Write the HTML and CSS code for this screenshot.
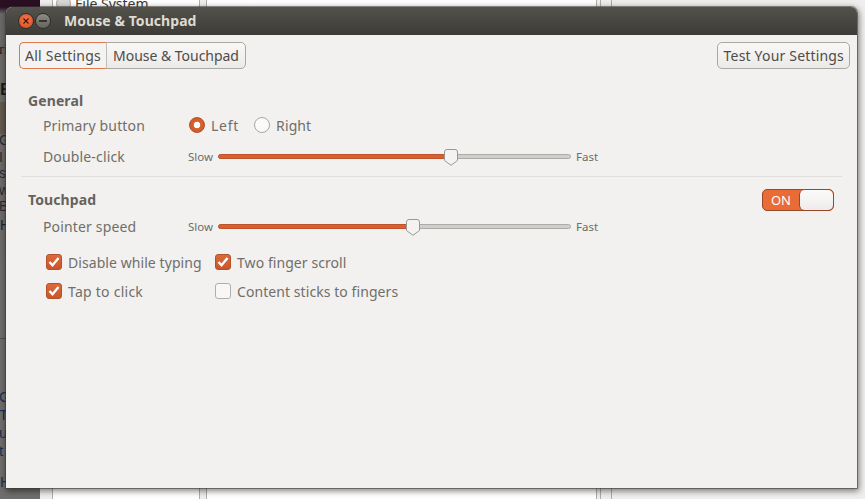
FILE: index.html
```html
<!DOCTYPE html>
<html lang="en">
<head>
<meta charset="utf-8">
<title>Mouse &amp; Touchpad</title>
<link rel="stylesheet" href="styles.css">
</head>
<body>
<div class="desktop">
  <div class="back-left">
    <div class="back-letters l1">ri</div>
    <div class="back-letters l2">E</div>
    <div class="back-band"></div>
    <div class="back-letters l3">G<br>I<br>s<br>w<br>B</div>
    <div class="back-letters l4">H</div>
    <div class="back-rule"></div>
    <div class="back-letters l5">G<br>T<br>u<br>t</div>
    <div class="back-letters l6">H</div>
  </div>
  <div class="back-strip s1"></div>
  <div class="back-strip s2"></div>
  <div class="back-strip s3"></div>
  <div class="back-strip s4"></div>
  <div class="back-file"><span class="back-icon"></span>File System</div>
  <div class="back-line b1"></div>
  <div class="back-line b2"></div>
  <div class="back-line b3"></div>
  <div class="back-line b4"></div>
  <div class="back-line b5"></div>
  <div class="back-line b6"></div>

  <section class="window">
    <header class="titlebar">
      <span class="wbtn close"><svg width="8" height="8" viewBox="0 0 8 8"><path d="M1.5 1.5l5 5M6.5 1.5l-5 5" stroke="#3d1406" stroke-width="1.1" fill="none"/></svg></span>
      <span class="wbtn minimize"><span class="dash"></span></span>
      <span class="title">Mouse &amp; Touchpad</span>
    </header>
    <div class="content">
      <div class="toolbar">
        <div class="crumbs">
          <span class="crumb active">All Settings</span>
          <span class="crumb">Mouse &amp; Touchpad</span>
        </div>
        <button class="btn">Test Your Settings</button>
      </div>

      <div class="group general">
        <h2 class="heading">General</h2>
        <div class="row">
          <span class="label">Primary button</span>
          <div class="radios">
            <span class="radio-item wide"><span class="radio on"></span>Left</span>
            <span class="radio-item"><span class="radio"></span>Right</span>
          </div>
        </div>
        <div class="row row-dbl">
          <span class="label">Double-click</span>
          <div class="scale">
            <span class="end">Slow</span>
            <div class="track"><div class="fill w-dbl"></div><svg class="thumb" width="14" height="17" viewBox="0 0 14 17"><path d="M3 .5h8a2.500 2.500 0 0 1 2.500 2.500v8.500L7 16.300.5 11.500V3A2.500 2.500 0 0 1 3 .5z" fill="#f4f3f2" stroke="#9a9894"/></svg></div>
            <span class="end">Fast</span>
          </div>
        </div>
      </div>

      <div class="separator"></div>

      <div class="group touchpad">
        <div class="head-row">
          <h2 class="heading">Touchpad</h2>
          <div class="switch"><span class="switch-on">ON</span><span class="switch-knob"></span></div>
        </div>
        <div class="row row-speed">
          <span class="label">Pointer speed</span>
          <div class="scale">
            <span class="end">Slow</span>
            <div class="track"><div class="fill w-speed"></div><svg class="thumb" width="14" height="17" viewBox="0 0 14 17"><path d="M3 .5h8a2.500 2.500 0 0 1 2.500 2.500v8.500L7 16.300.5 11.500V3A2.500 2.500 0 0 1 3 .5z" fill="#f4f3f2" stroke="#9a9894"/></svg></div>
            <span class="end">Fast</span>
          </div>
        </div>
        <div class="checks">
          <span class="check-item"><span class="check on"><svg width="16" height="16" viewBox="0 0 16 16"><path d="M3.500 8l3 3.200L12.500 4" stroke="#fff" stroke-width="2.400" fill="none"/></svg></span>Disable while typing</span>
          <span class="check-item"><span class="check on"><svg width="16" height="16" viewBox="0 0 16 16"><path d="M3.500 8l3 3.200L12.500 4" stroke="#fff" stroke-width="2.400" fill="none"/></svg></span>Two finger scroll</span>
          <span class="check-item wide"><span class="check on"><svg width="16" height="16" viewBox="0 0 16 16"><path d="M3.500 8l3 3.200L12.500 4" stroke="#fff" stroke-width="2.400" fill="none"/></svg></span>Tap to click</span>
          <span class="check-item"><span class="check"></span>Content sticks to fingers</span>
        </div>
      </div>
    </div>
  </section>
</div>
</body>
</html>
```
FILE: styles.css
```css
* { box-sizing: border-box; }
html, body { margin: 0; padding: 0; }
body { width: 865px; height: 499px; overflow: hidden; font-family: "Noto Sans", "Open Sans", sans-serif; }

.desktop { position: relative; width: 865px; height: 499px; background: #fff; overflow: hidden; }

.back-left { position: absolute; left: 0; top: 0; width: 40px; height: 499px; overflow: hidden;
  background: linear-gradient(#2b1024 0, #2b1024 7px, #6c6a68 14px, #6f6e6c 100%); }
.back-letters { position: absolute; left: 0; color: #1c2430; font-family: "Liberation Serif", serif; font-size: 15px; }
.l1 { left: -1px; top: 41px; color: #24221f; }
.l2 { top: 80px; font-family: "Liberation Sans", sans-serif; font-weight: 700; font-size: 17px; color: #1b1b1a; }
.back-band { position: absolute; left: 0; top: 102px; width: 40px; height: 32px; background: #62594b; }
.l3 { top: 132px; line-height: 16.500px; font-family: "Liberation Sans", sans-serif; font-size: 14px; left: -1px; color: #272b33; }
.l4 { top: 217px; font-family: "Liberation Sans", sans-serif; font-size: 14px; }
.back-rule { position: absolute; left: 0; top: 338px; width: 40px; height: 1px; background: #4f4e4d; }
.l5 { top: 388px; line-height: 18px; font-family: "Liberation Sans", sans-serif; font-size: 15px; left: -1px; color: #1b3050; }
.l6 { top: 473px; font-family: "Liberation Sans", sans-serif; font-size: 15px; color: #1b3050; }

.back-strip { position: absolute; top: 0; height: 499px; background: #efeeec; }
.s1 { left: 40px; width: 13px; }
.s2 { left: 199px; width: 8px; }
.s3 { left: 596px; width: 4px; }
.s4 { left: 600px; width: 265px; }
.back-file { position: absolute; left: 56px; top: -6px; display: flex; align-items: center; gap: 4px; font-size: 14px; color: #3c3b37; }
.back-icon { width: 15px; height: 15px; border-radius: 50%; background: #d8d7d4; border: 1px solid #a5a4a0; }
.back-line { position: absolute; top: 0; width: 1px; height: 499px; background: #aeada9; }
.b1 { left: 52px; }
.b2 { left: 199px; }
.b3 { left: 206px; }
.b4 { left: 596px; }
.b5 { left: 600px; }
.b6 { left: 611px; }

.window { position: absolute; left: 6px; top: 7px; width: 851px; height: 481px; border-radius: 6px 6px 0 0;
  display: flex; flex-direction: column; background: #f2f1ef;
  box-shadow: 0 0 0 1px rgba(60,59,55,.55), 1px 2px 6px 1px rgba(0,0,0,.5); }

.titlebar { height: 28px; flex: none; display: flex; align-items: center; padding: 0 0 0 12px;
  background: linear-gradient(#53524b, #3c3b37); border-radius: 6px 6px 0 0; }
.wbtn { width: 16px; height: 16px; border-radius: 50%; display: flex; align-items: center; justify-content: center; }
.close { background: radial-gradient(circle at 50% 40%, #f47a4c, #d8461a); border: 1px solid #2f2e2a; }
.minimize { margin-left: 1px; background: linear-gradient(#8c8b85, #64635d); border: 1px solid #2f2e2a; }
.dash { width: 8px; height: 2px; background: #35342f; }
.title { margin-left: 13px; font-size: 14px; font-weight: 700; color: #dfdbd2; line-height: 20px; letter-spacing: .06px; }

.content { flex: 1; padding: 7px 7px 0 13px; color: #6b6863; font-size: 14px; }

.toolbar { display: flex; justify-content: space-between; align-items: flex-start; height: 27px; }
.crumbs { display: flex; height: 27px; border: 1px solid #a9a8a3; border-radius: 5px; background: linear-gradient(#f9f8f7, #ebeae8); }
.crumb { display: flex; align-items: center; padding: 0 6px; color: #4e4c48; font-size: 14px; letter-spacing: -.03px; }
.crumb.active { margin: -1px 0 -1px -1px; padding: 0 5px 0 5px; border: 1px solid #dd7a52; border-right-color: #bdbcb8; border-radius: 5px 0 0 5px; background: #f4f3f1; letter-spacing: .25px; }
.btn { height: 27px; padding: 0 5px 0 6px; font: inherit; color: #4e4c48; border: 1px solid #a9a8a3; border-radius: 5px; background: linear-gradient(#f9f8f7, #ebeae8); letter-spacing: .18px; }

.group { padding-left: 9px; }
.general { margin-top: 23px; }
.heading { margin: 0; font-size: 14px; font-weight: 700; color: #66635e; line-height: 18px; letter-spacing: .1px; }
.row { display: flex; align-items: center; height: 20px; padding-left: 15px; }
.general .row { margin-top: 5px; }
.general .row-dbl { margin-top: 11px; }
.label { width: 146px; flex: none; color: #716e69; letter-spacing: .15px; }

.radios { display: flex; gap: 15px; }
.radio-item { display: inline-flex; align-items: center; gap: 6px; color: #716e69; letter-spacing: .1px; }
.radio-item.wide { letter-spacing: .75px; }
.radio { width: 16px; height: 16px; border-radius: 50%; border: 1px solid #a8a7a3; background: #fbfafa; }
.radio.on { border: 1px solid #b34f26; background: radial-gradient(circle, #fff 0, #fff 3px, #d9622f 3.600px, #c9562a 100%); }

.scale { display: flex; align-items: center; margin-left: -1px; }
.end { font-size: 11.500px; color: #6f6c67; line-height: 14px; margin-top: 2px; }
.track { position: relative; width: 353px; height: 5px; margin: 1px 5px 0 5px; display: flex; align-items: center;
  border-radius: 3px; background: #cfcecb; border: 1px solid #acaba7; }
.fill { height: 5px; margin: 0 -1px; border-radius: 3px; background: #d9602f; border: 1px solid #c0532a; flex: none; }
.w-dbl { width: 233px; }
.w-speed { width: 195px; }
.thumb { flex: none; margin-left: -6px; margin-top: 1px; }

.separator { height: 1px; background: #e0dfdc; margin: 10px 8px 0 2px; }

.touchpad { margin-top: 12px; }
.head-row { display: flex; justify-content: space-between; align-items: center; height: 22px; padding-right: 16px; }
.row-speed { margin-top: 5px; }
.switch { display: flex; width: 72px; height: 22px; border: 1px solid #96492a; border-radius: 5px; background: #e96b36; overflow: hidden; }
.switch-on { width: 36px; text-align: center; line-height: 20px; font-size: 13px; color: #fff; }
.switch-knob { flex: 1; border-left: 1px solid #96492a; border-radius: 5px; background: linear-gradient(#fbfafa, #eeeceb); }

.checks { display: grid; grid-template-columns: 169px auto; justify-content: start; row-gap: 9px; margin-top: 16px; padding-left: 18px; }
.check-item { display: inline-flex; align-items: center; gap: 6px; height: 20px; color: #716e69; letter-spacing: .07px; }
.check-item.wide { letter-spacing: .25px; }
.check { width: 16px; height: 16px; flex: none; border-radius: 3px; border: 1px solid #b0afab; background: #f8f7f6; display: block; }
.check.on { border-color: #b0532a; background: linear-gradient(#dd6a3a, #c9562a); }
.check svg { display: block; margin: -1px; }
```
